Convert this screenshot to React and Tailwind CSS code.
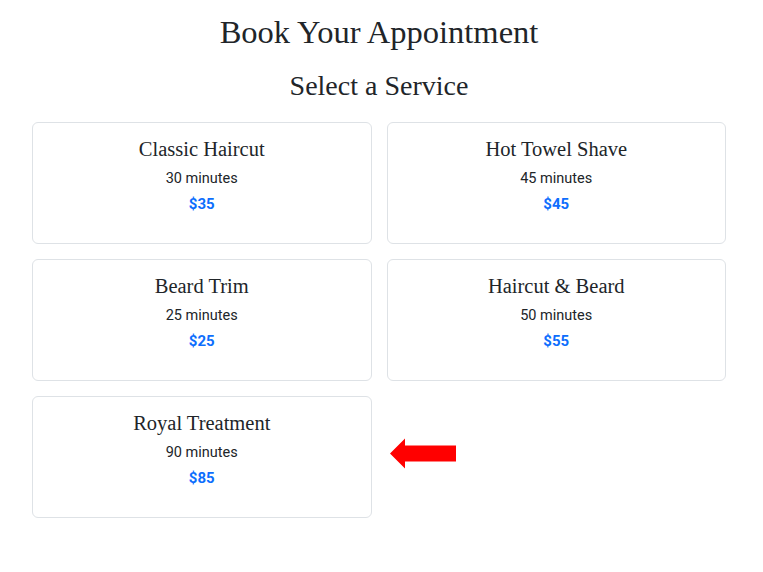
const services = [
  { name: 'Classic Haircut', time: '30 minutes', price: '$35' },
  { name: 'Hot Towel Shave', time: '45 minutes', price: '$45' },
  { name: 'Beard Trim', time: '25 minutes', price: '$25' },
  { name: 'Haircut & Beard', time: '50 minutes', price: '$55' },
  { name: 'Royal Treatment', time: '90 minutes', price: '$85' },
];

function ServiceCard({ service }) {
  return (
    <div className="h-[122px] rounded-md border border-[#dee2e6] bg-white pt-[13px] text-center">
      <h3 className="text-[20.5px] leading-[26px] text-[#212529] font-[Liberation_Serif,serif]">
        {service.name}
      </h3>
      <p className="mt-[7px] text-[14.5px] leading-[20px] text-[#212529]">{service.time}</p>
      <p className="mt-[5px] text-[15px] font-bold leading-[20px] text-[#0d6efd]">{service.price}</p>
    </div>
  );
}

export default function App() {
  return (
    <div className="min-h-screen bg-white font-[Roboto,sans-serif] text-[#212529]">
      <div className="ml-[32px] w-[694px] pt-[12px]">
        <h1 className="text-center text-[32.5px] leading-[40px] font-[Liberation_Serif,serif]">
          Book Your Appointment
        </h1>
        <h2 className="mt-[17px] text-center text-[28px] leading-[34px] font-[Liberation_Serif,serif]">
          Select a Service
        </h2>
        <div className="mt-[19px] grid grid-cols-2 gap-[15px]">
          {services.map((s) => (
            <ServiceCard key={s.name} service={s} />
          ))}
          <div className="relative">
            <svg
              className="absolute left-[3px] top-[42px]"
              width="67"
              height="31"
              viewBox="0 0 67 31"
            >
              <polygon points="0,15.5 15,0.5 15,7.5 66,7.5 66,23.5 15,23.5 15,30.5" fill="#ff0000" />
            </svg>
          </div>
        </div>
      </div>
    </div>
  );
}
